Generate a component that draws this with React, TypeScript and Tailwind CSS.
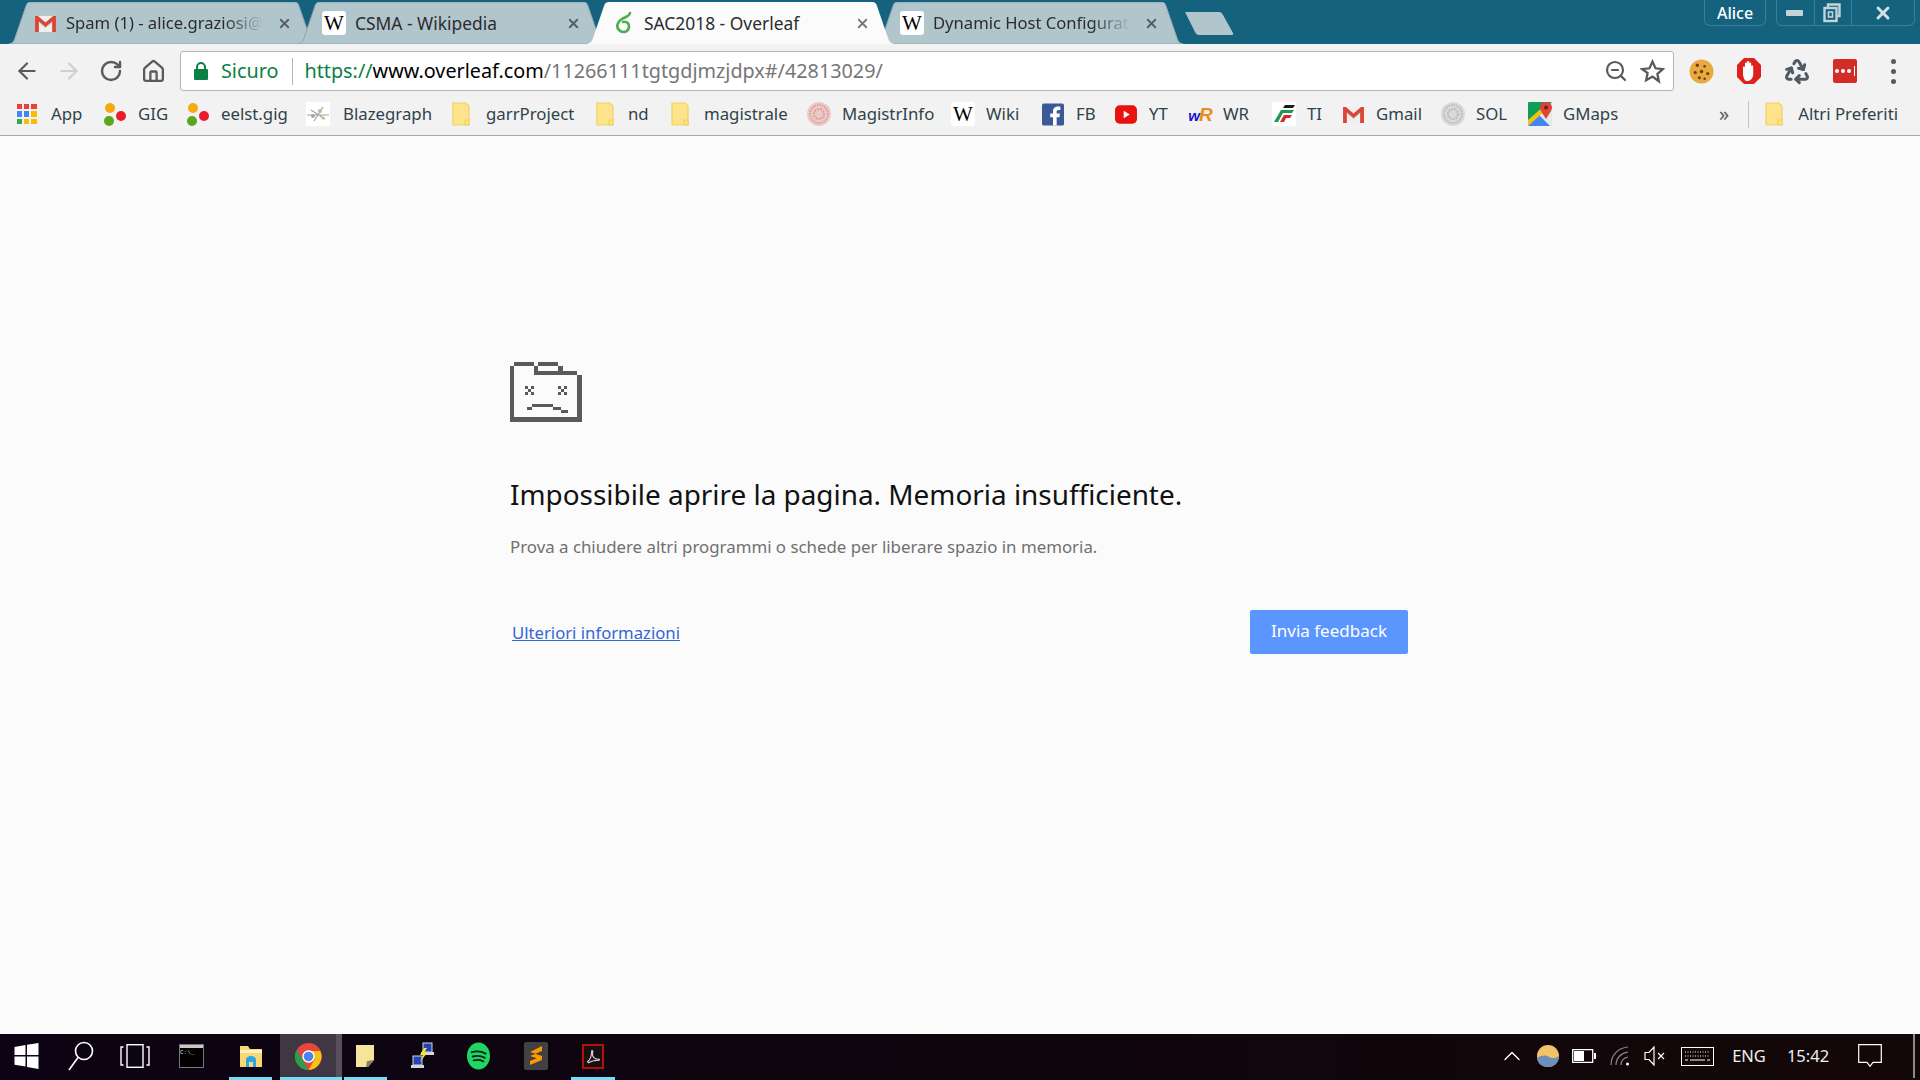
import { ArrowLeft, ArrowRight, ChevronUp, House, Recycle, RotateCw, X, ZoomOut } from "lucide-react";
import type { ReactNode } from "react";

const uiFont = "font-['Noto_Sans',sans-serif]";

function GmailIcon() {
  return (
    <svg viewBox="0 0 24 20" className="h-[19px] w-[23px]">
      <path d="M1 2h22v17H1z" fill="#efefef" />
      <path d="M1 2h3l8 7 8-7h3v17h-4V8l-7 6-7-6v11H1z" fill="#db4437" />
      <path d="M5 8l7 6 7-6v1l-7 6-7-6z" fill="#c9c9c9" />
    </svg>
  );
}

function WikiIcon() {
  return (
    <span className="flex h-6 w-6 items-center justify-center rounded-[3px] bg-white font-['Liberation_Serif',serif] text-[21px] leading-none text-black">
      W
    </span>
  );
}

function LeafIcon() {
  return (
    <svg viewBox="0 0 24 24" className="h-6 w-6" fill="none" stroke="#4cae4c" strokeWidth="2.6">
      <path d="M19 2c-1 4-5 4-8 6C6 11 5 16 8 19s9 3 10-3c.5-3-2-6-6-5" strokeLinecap="round" />
    </svg>
  );
}

function FolderIcon() {
  return (
    <svg viewBox="0 0 18 24" className="mr-[6px] h-6 w-[18px] shrink-0">
      <path d="M1 1h13l3 3v19H1z" fill="#fde48c" stroke="#f4cf62" strokeWidth="1.2" />
      <path d="M13 18h4v5h-4z" fill="#fde48c" stroke="#f4cf62" strokeWidth="1.2" />
    </svg>
  );
}

function DotsIcon() {
  return (
    <svg viewBox="0 0 24 24" className="h-6 w-6">
      <circle cx="7" cy="6" r="5" fill="#f9a80f" />
      <circle cx="18" cy="14" r="5" fill="#ea1c2c" />
      <circle cx="6" cy="19" r="5" fill="#5aa61e" />
    </svg>
  );
}

function AppsIcon() {
  const colors = ["#ea4335", "#ea4335", "#ea4335", "#4285f4", "#4285f4", "#fbbc05", "#34a853", "#fbbc05", "#fbbc05"];
  return (
    <span className="mr-[3px] grid h-[20px] w-[20px] grid-cols-3 gap-[2px]">
      {colors.map((c, i) => (
        <span key={i} className="h-full w-full" style={{ backgroundColor: c }} />
      ))}
    </span>
  );
}

function BlazeIcon() {
  return (
    <svg viewBox="0 0 24 24" className="h-6 w-6">
      <rect width="24" height="24" fill="#fff" />
      <path d="M1 13h22M5 8l14 9M8 19L17 5" stroke="#a5a59b" strokeWidth="1.2" />
      <circle cx="14" cy="9" r="2" fill="#c4bc8a" />
      <circle cx="7" cy="14" r="2" fill="#a5a5a5" />
      <circle cx="17" cy="16" r="1.500" fill="#c4bc8a" />
    </svg>
  );
}

function SealIcon({ color }: { color: string }) {
  return (
    <svg viewBox="0 0 24 24" className="h-6 w-6">
      <circle cx="12" cy="12" r="12" fill={color} opacity="0.28" />
      <circle cx="12" cy="12" r="9" fill="none" stroke={color} strokeWidth="1.500" strokeDasharray="1.500 1" opacity="0.55" />
      <circle cx="12" cy="12" r="5" fill="none" stroke={color} strokeWidth="2" strokeDasharray="2 1" opacity="0.45" />
    </svg>
  );
}

function FacebookIcon() {
  return (
    <svg viewBox="0 0 24 24" className="h-[23px] w-[22px]">
      <rect width="24" height="24" rx="2" fill="#3b5998" />
      <path d="M16 24v-9h3l.5-4H16V9c0-1.2.4-2 2-2h2V3.5C19.500 3.400 18.500 3.300 17.300 3.300 14.500 3.300 12 5 12 8.500V11H9v4h3v9z" fill="#fff" />
    </svg>
  );
}

function YoutubeIcon() {
  return (
    <svg viewBox="0 0 24 20" className="h-[19px] w-[22px]">
      <rect width="24" height="20" rx="5" fill="#e8130e" />
      <path d="M9.500 6l6.500 4-6.500 4z" fill="#fff" />
    </svg>
  );
}

function WrIcon() {
  return (
    <span className="flex w-6 items-baseline justify-center font-['Liberation_Sans',sans-serif] text-[19px] font-bold italic leading-none tracking-[-1px]">
      <span className="text-[15px] text-[#1414cc]">w</span>
      <span className="text-[#ee8a1a]">R</span>
    </span>
  );
}

function TrenitaliaIcon() {
  return (
    <svg viewBox="0 0 24 24" className="h-6 w-6">
      <rect width="24" height="24" fill="#fff" />
      <path d="M2 20L9 8h13l-2 3H11L6 20z" fill="#1a9a52" />
      <path d="M8 20l4-7h8l-2 3h-4l-2 4z" fill="#d9232e" />
      <path d="M11 6l2-3h10l-2 3z" fill="#1b1b1b" />
    </svg>
  );
}

function MapsIcon() {
  return (
    <svg viewBox="0 0 24 24" className="h-6 w-6">
      <rect width="24" height="24" rx="1" fill="#0f9d58" />
      <path d="M0 24L24 0v24z" fill="#e8e8e8" />
      <path d="M0 24l11-11 11 11z" fill="#4285f4" />
      <path d="M0 18L16 4l3 3L0 24z" fill="#f4c20d" />
      <path d="M18 0c3.500 0 6 2.500 6 5.500S21 12 18 17c-3-5-6-8.500-6-11.500S14.500 0 18 0z" fill="#db4437" />
      <circle cx="18" cy="5.500" r="2" fill="#7b1b12" />
    </svg>
  );
}

const bookmarks: { label: string; width: string; gap?: string; icon: ReactNode }[] = [
  { label: "App", width: "w-[87px]", icon: <AppsIcon /> },
  { label: "GIG", width: "w-[83px]", icon: <DotsIcon /> },
  { label: "eelst.gig", width: "w-[120px]", icon: <DotsIcon /> },
  { label: "Blazegraph", width: "w-[146px]", gap: "ml-[13px]", icon: <BlazeIcon /> },
  { label: "garrProject", width: "w-[144px]", gap: "ml-[10px]", icon: <FolderIcon /> },
  { label: "nd", width: "w-[75px]", gap: "ml-[8px]", icon: <FolderIcon /> },
  { label: "magistrale", width: "w-[136px]", gap: "ml-[9px]", icon: <FolderIcon /> },
  { label: "MagistrInfo", width: "w-[144px]", icon: <SealIcon color="#d9675f" /> },
  { label: "Wiki", width: "w-[90px]", icon: <WikiIcon /> },
  { label: "FB", width: "w-[73px]", icon: <FacebookIcon /> },
  { label: "YT", width: "w-[74px]", icon: <YoutubeIcon /> },
  { label: "WR", width: "w-[84px]", icon: <WrIcon /> },
  { label: "TI", width: "w-[69px]", icon: <TrenitaliaIcon /> },
  { label: "Gmail", width: "w-[100px]", icon: <GmailIcon /> },
  { label: "SOL", width: "w-[87px]", icon: <SealIcon color="#9a9a9a" /> },
  { label: "GMaps", width: "w-[161px]", icon: <MapsIcon /> },
];

const tabs: { title: string; active?: boolean; fade?: boolean; icon: ReactNode }[] = [
  { title: "Spam (1) - alice.graziosi@", fade: true, icon: <GmailIcon /> },
  { title: "CSMA - Wikipedia", icon: <WikiIcon /> },
  { title: "SAC2018 - Overleaf", active: true, icon: <LeafIcon /> },
  { title: "Dynamic Host Configurat", fade: true, icon: <WikiIcon /> },
];

function Tab({ title, active, fade, icon }: { title: string; active?: boolean; fade?: boolean; icon: ReactNode }) {
  return (
    <div className={`relative -mr-[18px] flex h-[42px] w-[307px] shrink-0 items-center ${active ? "z-10" : ""}`}>
      <svg viewBox="0 0 307 42" className="absolute inset-0 h-full w-full">
        <path
          d={"M0 42C4 41 5 39 6 36L17 4C18 1 19 0 22 0H285C288 0 289 1 290 4L301 36C302 39 303 41 307 42Z"}
          fill={active ? "#fbfbfb" : "#b1c5cc"}
          stroke={active ? "none" : "#8fa6ae"}
          strokeWidth="1"
        />
      </svg>
      <div className="relative ml-[24px] flex w-[24px] shrink-0 justify-center">{icon}</div>
      <div className={`relative ml-[9px] w-[198px] whitespace-nowrap text-[#2c2c2c] ${fade ? "text-[16.6px] [mask-image:linear-gradient(to_right,black_80%,transparent)]" : "text-[17.4px]"}`}>
        {title}
      </div>
      <X className={`relative ml-[13px] h-[15px] w-[15px] ${active ? "text-[#6f7f78]" : "text-[#555f63]"}`} strokeWidth={3} />
    </div>
  );
}

function SadFolder() {
  return (
    <svg viewBox="0 0 72 60" className="h-[60px] w-[72px]" fill="#5a5a5a" shapeRendering="crispEdges">
      <path d="M0 4h4v51h63V13h5v47H0z" />
      <path d="M4 0h20v4H4zM28 0h20v4H28zM24 4h4v5h20V4h5v5h14v4H24z" />
      <path d="M15 24h3v3h-3zM21 24h3v3h-3zM18 27h3v3h-3zM15 30h3v3h-3zM21 30h3v3h-3z" />
      <path d="M48 24h3v3h-3zM54 24h3v3h-3zM51 27h3v3h-3zM48 30h3v3h-3zM54 30h3v3h-3z" />
      <path d="M17 45h5v3h-5zM22 42h21v3H22zM43 45h8v3h-8zM51 48h7v3h-7z" />
    </svg>
  );
}

function ToolIcon({ children }: { children: ReactNode }) {
  return <div className="flex h-full w-[42px] items-center justify-center">{children}</div>;
}

function ExtIcon({ children }: { children: ReactNode }) {
  return <div className="flex h-full w-[48px] items-center justify-center">{children}</div>;
}

function BrowserChrome() {
  return (
    <>
      <div className="relative flex h-[44px] shrink-0 items-end bg-[#14627e] pl-[9px]">
        {tabs.map((t) => (
          <Tab key={t.title} {...t} />
        ))}
        <svg viewBox="0 0 50 24" className="mb-[9px] ml-[20px] h-6 w-[50px]">
          <path d="M1 1h33c2 0 3 1 4 3l10 18c.5 1 0 2-1 2H14c-2 0-3-1-4-3L1 3C0 2 0 1 1 1z" fill="#b1c5cc" />
        </svg>
        <div className="absolute right-[5px] top-0 flex h-[26px] items-start gap-[10px] text-white">
          <div className="flex h-[26px] w-[62px] items-center justify-center rounded-b-[6px] border border-t-0 border-[#3c7d95] text-[16px] font-medium">
            Alice
          </div>
          <div className="flex h-[26px] w-[139px] items-center rounded-b-[6px] border border-t-0 border-[#3c7d95]">
            <div className="flex h-full w-[38px] items-center justify-center border-r border-[#3c7d95]">
              <span className="mr-[2px] h-[6px] w-[17px] rounded-[1px] bg-[#c4d3d9]" />
            </div>
            <div className="flex h-full w-[37px] items-center justify-center border-r border-[#3c7d95]">
              <svg viewBox="0 0 18 20" className="mr-[3px] h-[20px] w-[18px]" fill="none" stroke="#c4d3d9" strokeWidth="2.4">
                <path d="M5 4V1.500h11.500V13H14" />
                <rect x="1.500" y="5" width="12" height="13" />
                <rect x="5.500" y="9" width="4" height="5" strokeWidth="1.600" />
              </svg>
            </div>
            <div className="flex h-full flex-1 items-center justify-center">
              <X className="h-[20px] w-[20px] text-[#d5e0e4]" strokeWidth={3.5} />
            </div>
          </div>
        </div>
      </div>

      <div className="flex h-[49px] shrink-0 items-center bg-[#f2f2f2] pb-[2px] pl-[6px] pt-[7px]">
        <ToolIcon><ArrowLeft className="h-[26px] w-[26px] text-[#5a5a5a]" strokeWidth={2} /></ToolIcon>
        <ToolIcon><ArrowRight className="h-[26px] w-[26px] text-[#cfcfcf]" strokeWidth={2} /></ToolIcon>
        <ToolIcon><RotateCw className="h-[24px] w-[24px] text-[#5a5a5a]" strokeWidth={2.4} /></ToolIcon>
        <ToolIcon><House className="h-[25px] w-[25px] text-[#5a5a5a]" strokeWidth={2.2} /></ToolIcon>
        <div className="ml-[6px] flex h-[40px] w-[1494px] items-center rounded-[3px] border border-[#b5b5b5] bg-white pl-[13px] pr-[8px] text-[19.8px]">
          <svg viewBox="0 0 14 18" className="h-[18px] w-[14px]" fill="#0b8043">
            <path d="M2 7V5a5 5 0 0110 0v2h-2V5a3 3 0 00-6 0v2z" />
            <rect y="7" width="14" height="11" rx="1" />
          </svg>
          <span className="ml-[13px] text-[#0b8043]">Sicuro</span>
          <span className="ml-[14px] h-[27px] w-px bg-[#b5b5b5]" />
          <span className="ml-[11px] flex-1 whitespace-nowrap">
            <span className="text-[#0b8043]">https://</span>
            <span className="text-black">www.overleaf.com</span>
            <span className="text-[#767676]">/11266111tgtgdjmzjdpx#/42813029/</span>
          </span>
          <ZoomOut className="h-[24px] w-[24px] text-[#5a5a5a]" strokeWidth={2.2} />
          <svg viewBox="0 0 24 24" className="ml-[12px] h-[25px] w-[25px]" fill="none" stroke="#5a5a5a" strokeWidth="2.2">
            <path d="M12 2.500l2.900 6.400 7 .8-5.200 4.700 1.400 6.900L12 16.800l-6.100 3.500 1.400-6.900L2.100 9.700l7-.8z" />
          </svg>
        </div>
        <div className="ml-[3px] flex h-full items-center">
          <ExtIcon>
            <svg viewBox="0 0 24 24" className="h-[25px] w-[25px]">
              <circle cx="12" cy="12" r="11.500" fill="#e8a93f" />
              <g fill="#6b3f18">
                <circle cx="8" cy="6" r="1.600" /><circle cx="15" cy="7" r="1.300" /><circle cx="6" cy="13" r="1.500" />
                <circle cx="12" cy="12" r="1.700" /><circle cx="18" cy="14" r="1.500" /><circle cx="10" cy="18" r="1.500" /><circle cx="15" cy="19" r="1.200" />
              </g>
            </svg>
          </ExtIcon>
          <ExtIcon>
            <svg viewBox="0 0 24 26" className="h-[26px] w-[24px]">
              <path d="M7 0h10l7 7v12l-7 7H7l-7-7V7z" fill="#e0201b" />
              <path d="M6 17V9.500c0-1.300 2-1.300 2 0V5.500c0-1.300 2-1.300 2 0V4c0-1.300 2.200-1.300 2.200 0v1.500c0-1.300 2-1.300 2 0v3c0-1.300 2-1.300 2 0V16c0 4-2.500 7-5.500 7S7 21 6 17z" fill="#fff" />
            </svg>
          </ExtIcon>
          <ExtIcon><Recycle className="h-[28px] w-[28px] text-[#4e5a64]" strokeWidth={2.6} /></ExtIcon>
          <ExtIcon>
            <div className="flex h-6 w-6 items-center justify-center gap-[2px] rounded-[2px] bg-[#d32d27]">
              <span className="h-[4px] w-[4px] rounded-full bg-white" />
              <span className="h-[4px] w-[4px] rounded-full bg-white" />
              <span className="h-[4px] w-[4px] rounded-full bg-white" />
              <span className="ml-px h-[10px] w-px bg-white" />
            </div>
          </ExtIcon>
          <ExtIcon>
            <div className="flex flex-col gap-[5px]">
              <span className="h-[5px] w-[5px] rounded-full bg-[#5a5a5a]" />
              <span className="h-[5px] w-[5px] rounded-full bg-[#5a5a5a]" />
              <span className="h-[5px] w-[5px] rounded-full bg-[#5a5a5a]" />
            </div>
          </ExtIcon>
        </div>
      </div>

      <div className="flex h-[43px] shrink-0 items-center border-b border-[#a8a8a8] bg-[#f2f2f2] pl-[16px] text-[16.8px] text-[#30424a]">
        {bookmarks.map((b) => (
          <div key={b.label} className={`flex ${b.width} shrink-0 items-center whitespace-nowrap`}>
            <span className="flex w-6 shrink-0 justify-center">{b.icon}</span>
            <span className={b.gap ?? "ml-[11px]"}>{b.label}</span>
          </div>
        ))}
        <span className="ml-[30px] text-[20px] leading-none text-[#5a5a5a]">»</span>
        <span className="ml-[19px] h-[27px] w-px bg-[#c4c4c4]" />
        <span className="ml-[16px] flex w-[24px] justify-center"><FolderIcon /></span>
        <span className="ml-[9px] whitespace-nowrap">Altri Preferiti</span>
      </div>
    </>
  );
}

function ChromeLogo() {
  return (
    <svg viewBox="0 0 24 24" className="h-[27px] w-[27px]">
      <circle cx="12" cy="12" r="12" fill="#e8453c" />
      <path d="M12 24A12 12 0 011.600 6l5.600 9.500L12 24z" fill="#279f4c" />
      <path d="M12 24l5.500-9.500L12 7h10.400A12 12 0 0112 24z" fill="#f7c31a" />
      <circle cx="12" cy="12" r="5.500" fill="#fff" />
      <circle cx="12" cy="12" r="4.300" fill="#4a84ee" />
    </svg>
  );
}

const taskItems: { width: string; bar?: string; active?: boolean; icon: ReactNode }[] = [
  {
    width: "w-[53px]",
    icon: (
      <svg viewBox="0 0 24 30" className="h-[30px] w-[25px]" fill="#fff">
        <path d="M0 6l11-2v10H0zM12.500 3.800L24 2v12H12.500zM0 15.500h11v10l-11-1.800zM12.500 15.500H24V28l-11.500-2z" />
      </svg>
    ),
  },
  {
    width: "w-[55px]",
    icon: (
      <svg viewBox="0 0 26 30" className="h-[30px] w-[26px]" fill="none" stroke="#fff" strokeWidth="1.600">
        <circle cx="16" cy="10" r="8.500" />
        <path d="M10 16.500L1 29" />
      </svg>
    ),
  },
  {
    width: "w-[54px]",
    icon: (
      <svg viewBox="0 0 30 24" className="h-[24px] w-[30px]" fill="none" stroke="#fff" strokeWidth="1.400">
        <rect x="7" y="0.700" width="16" height="22.600" />
        <path d="M3.500 3H1v18h2.500M26.500 3H29v18h-2.500" />
      </svg>
    ),
  },
  {
    width: "w-[59px]",
    icon: (
      <div className="flex h-[22px] w-[23px] flex-col bg-black outline outline-[#777]">
        <span className="h-[3px] bg-[#c8c8c8]" />
        <span className="font-['Liberation_Mono',monospace] text-[6px] leading-[9px] text-[#ddd]">C:\_</span>
      </div>
    ),
  },
  {
    width: "w-[59px]",
    bar: "left-[8px] right-[8px]",
    icon: (
      <svg viewBox="0 0 24 24" className="h-[24px] w-[24px]">
        <path d="M1 2h8l2 3h12v18H1z" fill="#f8d775" />
        <path d="M1 6h22v3H1z" fill="#fff2c0" />
        <path d="M7 23v-7c0-3 3-4 5-4s5 1 5 4v7h-3v-5h-4v5z" fill="#2ca5e8" />
      </svg>
    ),
  },
  { width: "w-[56px]", active: true, bar: "left-0 -right-[6px]", icon: <ChromeLogo /> },
  {
    width: "w-[58px]",
    bar: "left-[8px] right-[7px]",
    icon: (
      <svg viewBox="0 0 18 22" className="h-[22px] w-[18px]">
        <path d="M0 0h18v15l-6 7H0z" fill="#f3e59a" />
        <path d="M18 15l-7 1-1 6h2z" fill="#8d8260" />
      </svg>
    ),
  },
  {
    width: "w-[55px]",
    icon: (
      <svg viewBox="0 0 24 28" className="h-[28px] w-[24px]">
        <rect x="13" y="1" width="9" height="9" fill="#2344b8" stroke="#d5d5d5" />
        <rect x="11" y="10" width="13" height="3" fill="#d5d5d5" />
        <rect x="3" y="14" width="9" height="9" fill="#2344b8" stroke="#d5d5d5" />
        <rect x="1" y="23" width="13" height="3" fill="#d5d5d5" />
        <path d="M14 6l-4 7h3l-3 7 7-9h-3l3-5z" fill="#f6e632" />
      </svg>
    ),
  },
  {
    width: "w-[58px]",
    icon: (
      <svg viewBox="0 0 24 28" className="h-[28px] w-[23px]">
        <ellipse cx="12" cy="14" rx="12" ry="14" fill="#1ed760" />
        <path d="M5 10c5-1.500 10-1 14.500 1.500M6 14.500c4-1 9-.7 12.500 1.300M7 18.500c3.500-.8 7-.5 10 1" stroke="#10201a" strokeWidth="2" fill="none" strokeLinecap="round" />
      </svg>
    ),
  },
  {
    width: "w-[58px]",
    icon: (
      <div className="flex h-[28px] w-[24px] items-center justify-center rounded-[2px] bg-[#414141]">
        <svg viewBox="0 0 14 20" className="h-[20px] w-[14px]" fill="#ff9800">
          <path d="M13 0v5L1 10V6zM1 10l12 4v-4L1 6zM13 14v-4L1 15v4z" />
        </svg>
      </div>
    ),
  },
  {
    width: "w-[56px]",
    bar: "left-[6px] right-[6px]",
    icon: (
      <div className="flex h-[25px] w-[22px] items-center justify-center border-2 border-[#b5100c] bg-[#181010]">
        <svg viewBox="0 0 16 16" className="h-[15px] w-[15px]" fill="none" stroke="#d9d9d9" strokeWidth="1.200">
          <path d="M1 14c3-2 5-7 5-11 0-3 2-1 1 2-.8 3 2 6 7 6 1 .5 0 1-1 1-4 0-8 1-11 3" />
        </svg>
      </div>
    ),
  },
];

function Tray({ width, children }: { width: string; children: ReactNode }) {
  return <div className={`flex ${width} shrink-0 items-center justify-center`}>{children}</div>;
}

function Taskbar() {
  return (
    <div className="flex h-[46px] shrink-0 bg-gradient-to-r from-[#0c0414] to-[#130707] text-white">
      {taskItems.map((t, i) => (
        <div key={i} className={`relative flex h-full ${t.width} shrink-0 items-center justify-center ${t.active ? "bg-[#3f3843] shadow-[6px_0_0_#55505a]" : ""}`}>
          <div className="-mt-[2px] flex items-center justify-center">{t.icon}</div>
          {t.bar && <span className={`absolute bottom-0 h-[3px] bg-[#76dcf8] ${t.bar}`} />}
        </div>
      ))}
      <div className="ml-auto flex h-full items-center pb-[2px]">
        <Tray width="w-[36px]"><ChevronUp className="h-[28px] w-[28px] text-white" strokeWidth={1.2} /></Tray>
        <Tray width="w-[36px]">
          <svg viewBox="0 0 22 22" className="h-[22px] w-[22px]">
            <circle cx="11" cy="11" r="11" fill="#f3c269" />
            <path d="M0 13c5-3 9-3 12-1s7 1 10-1c0 7-5 11-11 11S0 18 0 13z" fill="#6f8fbb" />
          </svg>
        </Tray>
        <Tray width="w-[36px]">
          <svg viewBox="0 0 24 14" className="h-[14px] w-[24px]">
            <path d="M.7.700h20v12.600H.7z" fill="none" stroke="#fff" strokeWidth="1.300" />
            <rect x="2" y="2" width="10" height="10" fill="#fff" />
            <rect x="22" y="4" width="2" height="6" fill="#fff" />
          </svg>
        </Tray>
        <Tray width="w-[36px]">
          <svg viewBox="0 0 20 20" className="h-[20px] w-[20px]" fill="none" stroke="#8c8c8c" strokeWidth="1.200">
            <path d="M1 19C1 9 8 2 18 1M6 19c0-7 5-12 12-13M11 19c0-4 2-7 7-8" />
            <circle cx="17.500" cy="18" r="1.500" fill="#fff" stroke="none" />
          </svg>
        </Tray>
        <Tray width="w-[34px]">
          <svg viewBox="0 0 22 20" className="h-[20px] w-[22px]" fill="none" stroke="#fff" strokeWidth="1.200">
            <path d="M1 6.500h4L10 1v18l-5-5.500H1zM14 7l6 6M20 7l-6 6" />
          </svg>
        </Tray>
        <Tray width="w-[50px]">
          <svg viewBox="0 0 33 19" className="h-[19px] w-[33px]" fill="none" stroke="#fff" strokeWidth="1">
            <rect x="0.500" y="0.500" width="32" height="18" />
            <path d="M4 5h25M4 9h25" strokeDasharray="1 1.500" />
            <path d="M4 13h3M9 13h15M26 13h3" />
          </svg>
        </Tray>
        <Tray width="w-[54px]"><span className="text-[16.5px] text-[#f0f0f0]">ENG</span></Tray>
        <Tray width="w-[64px]"><span className="text-[16.5px] text-[#f0f0f0]">15:42</span></Tray>
        <Tray width="w-[60px]">
          <svg viewBox="0 0 24 24" className="h-[24px] w-[24px]" fill="none" stroke="#fff" strokeWidth="1.200">
            <path d="M.7.700h22.600v17.600H15l-3 4-3-4H.7z" />
          </svg>
        </Tray>
        <div className="ml-[13px] mr-[5px] h-full w-[2px] bg-[#8a8a8a]" />
      </div>
    </div>
  );
}

export default function App() {
  return (
    <div className={`flex h-screen w-full flex-col overflow-hidden bg-[#fbfbfb] ${uiFont}`}>
      <BrowserChrome />
      <main className="flex-1 pl-[510px] pt-[226px]">
        <div className="w-[898px]">
          <SadFolder />
          <h1 className="mt-[53px] text-[27.9px] font-normal leading-[38px] text-[#111]">
            Impossibile aprire la pagina. Memoria insufficiente.
          </h1>
          <p className="mt-[22px] text-[16.85px] leading-[24px] text-[#707070]">
            Prova a chiudere altri programmi o schede per liberare spazio in memoria.
          </p>
          <div className="mt-[51px] flex items-center justify-between">
            <a className="ml-[2px] mt-[1px] text-[16.7px] text-[#3367d6] underline">Ulteriori informazioni</a>
            <button className="h-[44px] w-[158px] rounded-[2px] bg-[#5b96ff] pb-[2px] text-[17px] text-white">
              Invia feedback
            </button>
          </div>
        </div>
      </main>
      <Taskbar />
    </div>
  );
}
